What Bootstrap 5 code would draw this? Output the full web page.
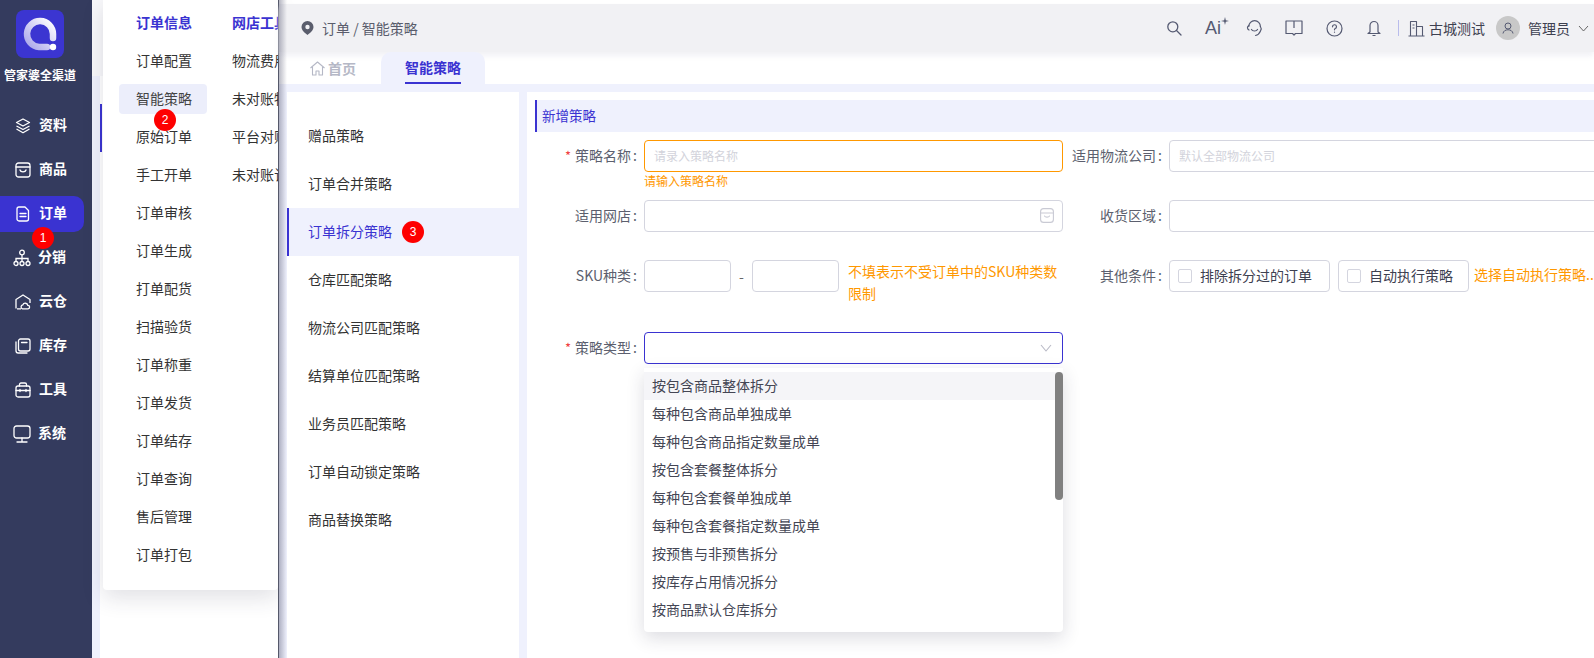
<!DOCTYPE html>
<html lang="zh">
<head>
<meta charset="UTF-8">
<meta name="viewport" content="width=device-width, initial-scale=1.0">
<title>智能策略</title>
<link href="https://cdn.jsdelivr.net/npm/bootstrap@5.3.0/dist/css/bootstrap.min.css" rel="stylesheet">
<style>
    html, body { height: 100%; overflow: hidden; }
    body { font-family: "Noto Sans CJK SC", "Liberation Sans", sans-serif; font-size: 14px; color: #333; background: #fff; }
    .app-root { height: 658px; width: 1594px; position: relative; overflow: hidden; }

    /* 左侧导航 */
    .side-bar { width: 92px; background: #343b5e; color: #fff; flex: none; }
    .side-logo { width: 48px; height: 48px; margin: 10px 0 0 16px; border-radius: 8px; background: #3b35d1; }
    .side-title { font-size: 12px; font-weight: 700; line-height: 18px; margin-top: 8px; width: 80px; text-align: center; white-space: nowrap; height: 38px; }
    .side-item { height: 36px; width: 84px; margin: 4px 0 8px; padding-left: 15px; gap: 8px; font-weight: 700; border-radius: 0 10px 10px 0; position: relative; }
    .side-item.on { background: #3a33d1; }
    .side-item span { margin-bottom: 3px; }
    .side-item svg { width: 16px; height: 16px; flex: none; }
    .side-item svg.wide { width: 18px; height: 18px; margin: 0 -1px 0 -2px; }
    .num-dot { position: absolute; width: 22px; height: 22px; border-radius: 50%; background: #fe0000; color: #fff; font-size: 12px; line-height: 22px; text-align: center; font-family: "Liberation Sans", sans-serif; font-weight: 400; z-index: 5; }

    /* 弹出菜单下面那层 */
    .under-col { width: 187px; flex: none; padding-top: 76px; background: linear-gradient(#f8f8fa, #f8f8fa) no-repeat 0 0 / 100% 76px; }
    .under-inner { height: 100%; background: #eff1fd; padding-left: 8px; }
    .under-panel { height: 100%; background: #fff; padding-top: 28px; }
    .under-mark { width: 2px; height: 48px; background: #3a33d1; }

    .fly-menu { position: absolute; left: 103px; top: 0; width: 175px; height: 590px; background: #fff; border-radius: 0 0 4px 4px; box-shadow: 0 8px 22px rgba(40, 40, 70, .14); overflow: hidden; z-index: 3; padding: 8px 0 0 16px; gap: 8px; }
    .fly-col { width: 88px; flex: none; }
    .fly-link { height: 30px; line-height: 28px; margin-bottom: 8px; padding-left: 17px; border-radius: 4px; white-space: nowrap; color: #333; }
    .fly-link.head { color: #3a33d1; font-weight: 700; }
    .fly-link.cur { background: #eceefb; color: #444; position: relative; }

    /* 主区域 */
    .main-col { flex: 1; min-width: 0; position: relative; border-left: 1.5px solid #55586a; z-index: 4; margin-left: -1px; }
    .main-col::before { content: ""; position: absolute; left: 0; top: 0; bottom: 0; width: 8px; background: linear-gradient(90deg, rgba(70, 72, 100, .38), rgba(70, 72, 100, 0)); z-index: 3; pointer-events: none; }
    .top-bar { height: 48px; margin-top: 4px; background: #f1f1f4; padding: 0 0 0 23px; box-shadow: 0 4px 5px rgba(240, 240, 244, .85); position: relative; z-index: 1; }
    .crumb { color: #5a5d6c; gap: 8px; margin-left: -1px; line-height: 20px; }
    .tool-icons { margin-left: auto; height: 100%; }
    .tool-icons svg { display: block; }
    .tool-box { width: 40px; display: flex; justify-content: center; color: #555a72; }
    .ai-mark { font-family: "Liberation Sans", sans-serif; font-size: 18px; line-height: 20px; position: relative; padding-right: 2px; }
    .ai-mark svg { position: absolute; right: -6px; top: -1px; }
    .tool-line { width: 1px; height: 16px; background: #b9bcec; margin: 0 9px 0 4px; }
    .shop-name { color: #3d4050; margin-left: 4px; line-height: 20px; }
    .user-pic { width: 24px; height: 24px; border-radius: 50%; background: #c8c8c8; margin: 0 8px 0 11px; }
    .tab-band { height: 32px; padding-left: 31px; gap: 25px; background: #fff; }
    .tab-home { color: #b5b8c6; font-weight: 700; gap: 3px; position: relative; z-index: 2; }
    .tab-cur { width: 104px; background: #eff1fd; border-radius: 10px 10px 0 0; color: #3a33d1; font-weight: 700; position: relative; z-index: 2; }
    .tab-cur span { border-bottom: 2px solid #3a33d1; line-height: 28px; height: 32px; padding-top: 1px; }
    .work-area { background: #eff1fd; padding: 8px 0 0 8px; gap: 8px; height: 574px; }
    .strategy-list { width: 232px; background: #fff; padding-top: 20px; flex: none; }
    .strategy-item { height: 48px; padding: 0 0 2px 19px; gap: 10px; color: #333; border-left: 2px solid transparent; }
    .strategy-item.on { background: #eff1fd; color: #3a33d1; border-left-color: #3a33d1; }
    .strategy-item .num-dot { position: static; margin-top: 2px; }
    .form-panel { flex: 1; background: #fff; padding: 8px 0 0 8px; position: relative; }
    .panel-head { height: 32px; background: #eff1fd; border-left: 2px solid #3a33d1; padding-left: 5px; color: #3a33d1; line-height: 30px; font-size: 13.5px; }
    .form-area { display: grid; grid-template-columns: 103px 419px 94px 520px; column-gap: 6px; grid-template-rows: 60px 60px 72px auto; margin-top: 8px; }
    .field-name { height: 32px; line-height: 30px; text-align: right; color: #5c5f6e; white-space: nowrap; padding-right: 1px; }
    .field-name i { color: #f04040; font-style: normal; margin-right: 4px; font-size: 13px; }
    .field-name b { font-weight: 400; margin-left: 2px; }
    .box-input { height: 32px; border: 1px solid #d4d5df; border-radius: 4px; box-shadow: none; padding: 0 9px 2px; font-size: 12px; background: #fff; }
    .box-input::placeholder { color: #d2d3db; }
    .box-input:focus { border-color: #d4d5df; box-shadow: none; }
    .box-input.warn, .box-input.warn:focus { border-color: #ff9800; }
    .box-input.act, .box-input.act:focus { border-color: #3a33d1; }
    .input-wrap { position: relative; height: 32px; }
    .input-icon { position: absolute; right: 9px; top: 8px; color: #c9cad4; }
    .warn-text { color: #ff9800; font-size: 12px; line-height: 18px; }
    .short-input { width: 87px; flex: none; }
    .range-dash { width: 21px; text-align: center; color: #666; line-height: 32px; flex: none; }
    .tip-text { color: #ff9800; width: 215px; margin-left: 9px; line-height: 22px; }
    .check-box { height: 32px; border: 1px solid #d4d5df; border-radius: 4px; padding: 0 0 2px 8px; gap: 8px; color: #3d4050; white-space: nowrap; }
    .check-box .form-check-input { width: 14px; height: 14px; margin: 2px 0 0; border-radius: 2px; border-color: #d4d5df; flex: none; }
    .check-a { width: 161px; }
    .check-b { width: 131px; margin-left: 8px; }
    .auto-tip { color: #ff9800; margin-left: 5px; white-space: nowrap; line-height: 29px; }

    /* 策略类型下拉 */
    .type-drop { position: absolute; left: 644px; top: 368px; width: 419px; height: 264px; background: #fff; box-shadow: 0 6px 18px rgba(40, 40, 70, .16); border-radius: 0 0 4px 4px; padding-top: 4px; z-index: 6; }
    .type-row { height: 28px; line-height: 26px; padding-left: 8px; color: #444654; }
    .type-row.hov { background: #f5f5f8; }
    .drop-thumb { position: absolute; right: 0; top: 4px; width: 8px; height: 128px; border-radius: 4px; background: #808080; }
</style>
</head>
<body>
<div class="app-root d-flex">

    <!-- 左侧导航 -->
    <div class="side-bar">
        <div class="side-logo d-flex align-items-center justify-content-center">
            <svg width="36" height="36" viewBox="0 0 36 36">
                <defs><linearGradient id="ringFill" x1="1" y1="0" x2="0" y2="1"><stop offset="0" stop-color="#fff"/><stop offset="1" stop-color="#a9a6ea"/></linearGradient></defs>
                <path d="M25 31H17A13 13 0 1 1 31 18V22" fill="none" stroke="url(#ringFill)" stroke-width="6.5" stroke-linecap="round"/>
                <circle cx="31" cy="31" r="3.2" fill="#fff"/>
            </svg>
        </div>
        <div class="side-title">管家婆全渠道</div>
        <div class="side-item d-flex align-items-center">
            <svg viewBox="0 0 16 16" fill="none" stroke="#fff" stroke-width="1.3" stroke-linejoin="round"><path d="M8 1 14.500 4.500 8 8 1.500 4.500Z"/><path d="M1.500 8 8 11.500 14.500 8M1.500 11 8 14.800 14.500 11"/></svg>
            <span>资料</span>
        </div>
        <div class="side-item d-flex align-items-center">
            <svg viewBox="0 0 16 16" fill="none" stroke="#fff" stroke-width="1.3" stroke-linecap="round"><rect x="1" y="1" width="14" height="14" rx="2.500"/><path d="M1 5h14M5 8c.6 2.600 5.400 2.600 6 0"/></svg>
            <span>商品</span>
        </div>
        <div class="side-item on d-flex align-items-center">
            <svg viewBox="0 0 16 16" fill="none" stroke="#fff" stroke-width="1.3" stroke-linecap="round" stroke-linejoin="round"><path d="M4 1h6l3.500 3.500V13a2 2 0 0 1-2 2H4a2 2 0 0 1-2-2V3a2 2 0 0 1 2-2Z"/><path d="M5 7.500h6M5 10.500h6"/></svg>
            <span>订单</span>
            <div class="num-dot" style="left: 32px; top: 31px">1</div>
        </div>
        <div class="side-item d-flex align-items-center">
            <svg class="wide" viewBox="0 0 18 18" fill="none" stroke="#fff" stroke-width="1.3"><circle cx="9" cy="3.500" r="2.300"/><circle cx="3" cy="14.500" r="2"/><circle cx="9" cy="14.500" r="2"/><circle cx="15" cy="14.500" r="2"/><path d="M9 5.800v6.700M3 12.500V9.500h12v3"/></svg>
            <span>分销</span>
        </div>
        <div class="side-item d-flex align-items-center">
            <svg viewBox="0 0 16 16" fill="none" stroke="#fff" stroke-width="1.3" stroke-linejoin="round"><path d="M1 14.500V5.500L8 1l7 4.500V9M6 14.800H2"/><path d="M7.500 14.800a2 2 0 0 1 .3-3.900 2.600 2.600 0 0 1 5 .5 1.700 1.700 0 0 1 .2 3.400Z"/></svg>
            <span>云仓</span>
        </div>
        <div class="side-item d-flex align-items-center">
            <svg viewBox="0 0 16 16" fill="none" stroke="#fff" stroke-width="1.3" stroke-linecap="round"><rect x="3.500" y="1" width="11.500" height="12" rx="2"/><path d="M1 4v8.800A2.200 2.200 0 0 0 3.200 15H12M6.500 4.500h5.500"/></svg>
            <span>库存</span>
        </div>
        <div class="side-item d-flex align-items-center">
            <svg viewBox="0 0 16 16" fill="none" stroke="#fff" stroke-width="1.3" stroke-linecap="round"><rect x="1" y="4" width="14" height="11" rx="2"/><path d="M4.500 4V2.500A1.500 1.500 0 0 1 6 1h4a1.500 1.500 0 0 1 1.500 1.500V4M1 8.500h14M5 7.500v2M11 7.500v2"/></svg>
            <span>工具</span>
        </div>
        <div class="side-item d-flex align-items-center">
            <svg class="wide" viewBox="0 0 18 18" fill="none" stroke="#fff" stroke-width="1.3" stroke-linecap="round"><rect x="1" y="1" width="16" height="12" rx="2.500"/><path d="M9 13v4M4 17h10"/></svg>
            <span>系统</span>
        </div>
    </div>

    <!-- 菜单下面的页面 -->
    <div class="under-col">
        <div class="under-inner">
            <div class="under-panel"><div class="under-mark"></div></div>
        </div>
    </div>

    <!-- 订单弹出菜单 -->
    <div class="fly-menu d-flex">
        <div class="fly-col">
            <div class="fly-link head">订单信息</div>
            <div class="fly-link">订单配置</div>
            <div class="fly-link cur">智能策略<div class="num-dot" style="left: 35px; top: 25px">2</div></div>
            <div class="fly-link">原始订单</div>
            <div class="fly-link">手工开单</div>
            <div class="fly-link">订单审核</div>
            <div class="fly-link">订单生成</div>
            <div class="fly-link">打单配货</div>
            <div class="fly-link">扫描验货</div>
            <div class="fly-link">订单称重</div>
            <div class="fly-link">订单发货</div>
            <div class="fly-link">订单结存</div>
            <div class="fly-link">订单查询</div>
            <div class="fly-link">售后管理</div>
            <div class="fly-link">订单打包</div>
        </div>
        <div class="fly-col">
            <div class="fly-link head">网店工具</div>
            <div class="fly-link">物流费用</div>
            <div class="fly-link">未对账物流</div>
            <div class="fly-link">平台对账单</div>
            <div class="fly-link">未对账订单</div>
        </div>
    </div>

    <!-- 主区域 -->
    <div class="main-col">
        <div class="top-bar d-flex align-items-center">
            <div class="crumb d-flex align-items-center">
                <svg width="13" height="14" viewBox="0 0 13 14"><path fill-rule="evenodd" fill="#5a5d6c" d="M6.500 0A6 6 0 0 1 12.500 6C12.500 9.500 8.500 12.500 6.500 14 4.500 12.500.5 9.500.5 6A6 6 0 0 1 6.500 0ZM6.500 3.800A2.200 2.200 0 1 0 6.500 8.200 2.200 2.200 0 0 0 6.500 3.800Z"/></svg>
                <span>订单 / 智能策略</span>
            </div>
            <div class="tool-icons d-flex align-items-center">
                <div class="tool-box"><svg width="16" height="16" viewBox="0 0 16 16" fill="none" stroke="currentColor" stroke-width="1.300" stroke-linecap="round"><circle cx="6.800" cy="6.800" r="5"/><path d="M10.500 10.500 15 15"/></svg></div>
                <div class="tool-box"><span class="ai-mark">Ai<svg width="8" height="8" viewBox="0 0 8 8"><path fill="currentColor" d="M4 0 4.800 3.200 8 4 4.800 4.800 4 8 3.200 4.800 0 4 3.200 3.200Z"/></svg></span></div>
                <div class="tool-box"><svg width="17" height="17" viewBox="0 0 17 17" fill="none" stroke="currentColor" stroke-width="1.200" stroke-linecap="round"><path d="M2.800 6.500A5.800 5.800 0 0 1 14.400 6.500"/><path d="M2.800 5.500C1 6.500 1 9 3 10M14.400 6.500C15.500 8 15.500 9.500 14.500 11 13.500 13.500 12 15 9.500 15.500"/><path d="M5.500 9.500c1 2 5 2 6 0"/></svg></div>
                <div class="tool-box"><svg width="18" height="16" viewBox="0 0 18 16" fill="none" stroke="currentColor" stroke-width="1.200" stroke-linejoin="round"><path d="M1 1h16v12.500H10.500L9 15l-1.500-1.500H1ZM9 1v7"/></svg></div>
                <div class="tool-box"><svg width="17" height="17" viewBox="0 0 17 17" fill="none" stroke="currentColor" stroke-width="1.200" stroke-linecap="round"><circle cx="8.500" cy="8.500" r="7.500"/><path d="M6.500 6.800A2 2 0 1 1 9 8.700c-.4.200-.5.500-.5 1.100M8.500 12v.2"/></svg></div>
                <div class="tool-box"><svg width="14" height="17" viewBox="0 0 14 17" fill="none" stroke="currentColor" stroke-width="1.200" stroke-linejoin="round"><path d="M7 1.500a4 4 0 0 1 4 4V12l2 1.500H1L3 12V5.500a4 4 0 0 1 4-4ZM5.500 15.500h3"/></svg></div>
                <div class="tool-line"></div>
                <svg width="17" height="17" viewBox="0 0 17 17" fill="none" stroke="#555a72" stroke-width="1.100" stroke-linejoin="round"><path d="M.5 16h16M2.500 16V1.500h6V16M8.500 6.500h6V16M4.500 5h2M4.500 8h2"/></svg>
                <span class="shop-name">古城测试</span>
                <div class="user-pic d-flex align-items-center justify-content-center">
                    <svg width="12" height="12" viewBox="0 0 12 12" fill="none" stroke="#555a72" stroke-width="1"><circle cx="6" cy="4" r="3"/><path d="M1 11.500c.5-5 9.500-5 10 0"/></svg>
                </div>
                <span class="shop-name m-0">管理员</span>
                <svg class="ms-2" width="11" height="7" viewBox="0 0 11 7" fill="none" stroke="#666" stroke-width="1"><path d="M1 1 5.500 6 10 1"/></svg>
                <div style="width: 5px"></div>
            </div>
        </div>
        <div class="tab-band d-flex">
            <div class="tab-home d-flex align-items-center">
                <svg width="15" height="15" viewBox="0 0 15 15" fill="none" stroke="#b5b8c6" stroke-width="1.100" stroke-linejoin="round"><path d="M.5 7 7.500 1l7 6M2.500 6v8h3.500v-4h3v4h3.500V6"/></svg>
                <span>首页</span>
            </div>
            <div class="tab-cur d-flex justify-content-center"><span>智能策略</span></div>
        </div>
        <div class="work-area d-flex">
            <div class="strategy-list">
                <div class="strategy-item d-flex align-items-center">赠品策略</div>
                <div class="strategy-item d-flex align-items-center">订单合并策略</div>
                <div class="strategy-item on d-flex align-items-center">订单拆分策略<div class="num-dot">3</div></div>
                <div class="strategy-item d-flex align-items-center">仓库匹配策略</div>
                <div class="strategy-item d-flex align-items-center">物流公司匹配策略</div>
                <div class="strategy-item d-flex align-items-center">结算单位匹配策略</div>
                <div class="strategy-item d-flex align-items-center">业务员匹配策略</div>
                <div class="strategy-item d-flex align-items-center">订单自动锁定策略</div>
                <div class="strategy-item d-flex align-items-center">商品替换策略</div>
            </div>
            <div class="form-panel">
                <div class="panel-head">新增策略</div>
                <div class="form-area">
                    <div class="field-name"><i>*</i>策略名称<b>:</b></div>
                    <div>
                        <input class="form-control box-input warn" placeholder="请录入策略名称">
                        <div class="warn-text">请输入策略名称</div>
                    </div>
                    <div class="field-name">适用物流公司<b>:</b></div>
                    <div class="input-wrap">
                        <input class="form-control box-input" placeholder="默认全部物流公司">
                        <svg class="input-icon" width="16" height="15" viewBox="0 0 16 15" fill="none" stroke="currentColor" stroke-width="1.100" stroke-linejoin="round"><path d="M4 12H1.500V1.500h9V12H7M10.500 5h3l2 3v4H14M10.500 12H11M1 5h4M1 8h3"/><circle cx="5.500" cy="12.500" r="1.500"/><circle cx="12.500" cy="12.500" r="1.500"/></svg>
                    </div>

                    <div class="field-name">适用网店<b>:</b></div>
                    <div class="input-wrap">
                        <input class="form-control box-input">
                        <svg class="input-icon" width="14" height="15" viewBox="0 0 14 15" fill="none" stroke="currentColor" stroke-width="1.100" stroke-linecap="round"><rect x=".6" y=".6" width="12.800" height="13.800" rx="3"/><path d="M.6 5h12.800M4.500 8c.8 1.500 4.200 1.500 5 0"/></svg>
                    </div>
                    <div class="field-name">收货区域<b>:</b></div>
                    <div><input class="form-control box-input"></div>

                    <div class="field-name">SKU种类<b>:</b></div>
                    <div class="d-flex align-items-start">
                        <input class="form-control box-input short-input">
                        <div class="range-dash">-</div>
                        <input class="form-control box-input short-input">
                        <div class="tip-text">不填表示不受订单中的SKU种类数限制</div>
                    </div>
                    <div class="field-name">其他条件<b>:</b></div>
                    <div class="d-flex align-items-start">
                        <label class="check-box check-a d-flex align-items-center"><input class="form-check-input" type="checkbox"><span>排除拆分过的订单</span></label>
                        <label class="check-box check-b d-flex align-items-center"><input class="form-check-input" type="checkbox"><span>自动执行策略</span></label>
                        <span class="auto-tip">选择自动执行策略...</span>
                    </div>

                    <div class="field-name"><i>*</i>策略类型<b>:</b></div>
                    <div class="input-wrap">
                        <input class="form-control box-input act">
                        <svg class="input-icon" style="top: 12px; right: 11px" width="12" height="8" viewBox="0 0 12 8" fill="none" stroke="#b9bac6" stroke-width="1.100"><path d="M1 1 6 7 11 1"/></svg>
                    </div>
                </div>
            </div>
        </div>
    </div>

    <!-- 策略类型下拉 -->
    <div class="type-drop">
        <div class="type-row hov">按包含商品整体拆分</div>
        <div class="type-row">每种包含商品单独成单</div>
        <div class="type-row">每种包含商品指定数量成单</div>
        <div class="type-row">按包含套餐整体拆分</div>
        <div class="type-row">每种包含套餐单独成单</div>
        <div class="type-row">每种包含套餐指定数量成单</div>
        <div class="type-row">按预售与非预售拆分</div>
        <div class="type-row">按库存占用情况拆分</div>
        <div class="type-row">按商品默认仓库拆分</div>
        <div class="drop-thumb"></div>
    </div>
</div>
<script src="https://cdn.jsdelivr.net/npm/bootstrap@5.3.0/dist/js/bootstrap.bundle.min.js"></script>
</body>
</html>
